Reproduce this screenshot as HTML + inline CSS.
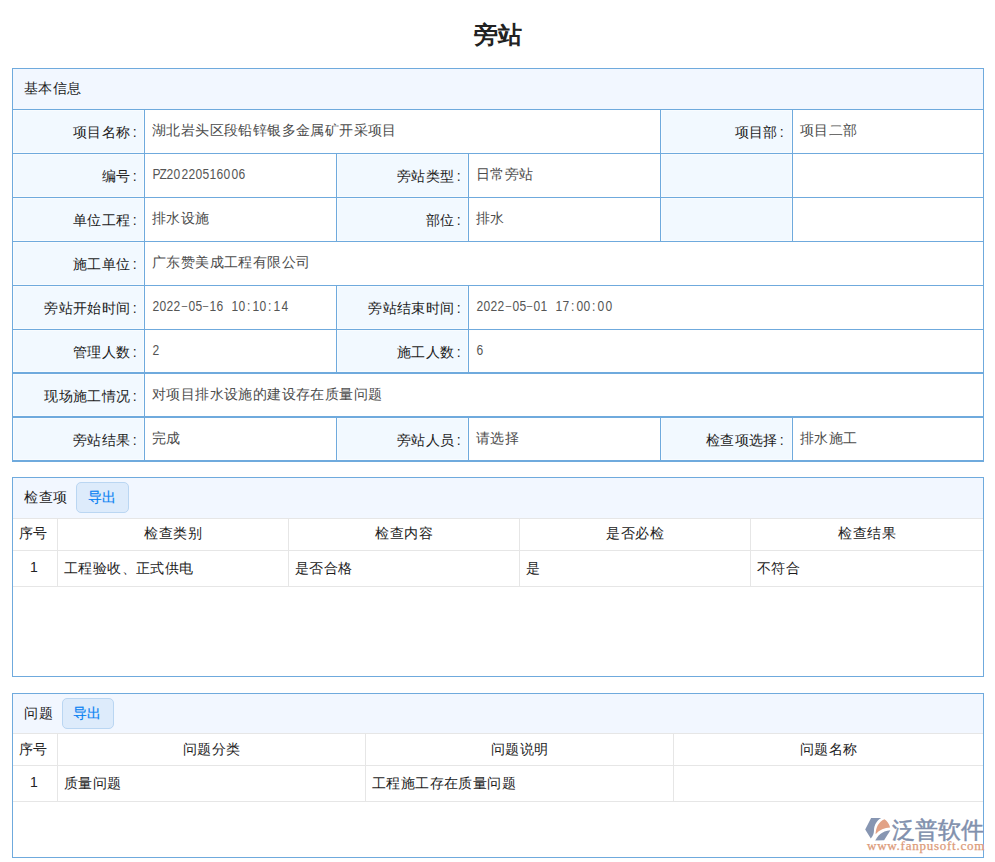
<!DOCTYPE html>
<html><head><meta charset="utf-8">
<style>
*{margin:0;padding:0;box-sizing:border-box}
html,body{width:995px;height:862px;overflow:hidden;background:#fff}
body{position:relative;font-family:"Liberation Sans",sans-serif;font-size:14px;color:#333}
.a{position:absolute}
.h{position:absolute;background:#6faadd;height:1px}
.v{position:absolute;background:#6faadd;width:1px}
.g{position:absolute;background:#e6e6e6}
.lb{position:absolute;background:#f2f9ff;box-shadow:0 0 0 1px #f8fcff}
.lt b{font-weight:normal;margin-left:2px}
.lt{position:absolute;text-align:right;white-space:nowrap;color:#1c1c1c;line-height:20px;font-size:14px;letter-spacing:0.4px}
.vt{position:absolute;white-space:nowrap;color:#4c4c4c;line-height:20px;font-size:14px;letter-spacing:0.4px}
.mono{font-size:14px;letter-spacing:0;color:#555}
.mono i.d{font-size:11.5px;position:relative;top:-2px}
.mono i{font-style:normal;display:inline-block;width:7.15px;text-align:center;transform:scaleX(.86)}
.th{position:absolute;text-align:center;white-space:nowrap;color:#222;line-height:20px;font-size:14px;letter-spacing:0.4px;text-indent:0.4px}
.td{position:absolute;white-space:nowrap;color:#1c1c1c;line-height:20px;font-size:14px;letter-spacing:0.4px}
.btn{position:absolute;background:#ddebfb;border:1px solid #bad6f2;border-radius:5px;color:#0a82f2;-webkit-text-stroke:0.2px #0a82f2;text-align:center;line-height:29px;font-size:14px;letter-spacing:0.4px;text-indent:0.4px}
</style></head><body>

<div class="a" style="left:0;width:995px;top:20px;text-align:center;font-size:24px;font-weight:bold;color:#222;line-height:30px">旁站</div>

<!-- ===== Table 1 ===== -->
<!-- header bg -->
<div class="a" style="left:13px;top:69px;width:970px;height:40px;background:#f2f7ff"></div>
<!-- label bgs (with 1px white inset) -->
<div class="lb" style="left:14px;top:111px;width:129px;height:41px"></div>
<div class="lb" style="left:662px;top:111px;width:129px;height:41px"></div>
<div class="lb" style="left:14px;top:155px;width:129px;height:41px"></div>
<div class="lb" style="left:338px;top:155px;width:129px;height:41px"></div>
<div class="lb" style="left:662px;top:155px;width:129px;height:41px"></div>
<div class="lb" style="left:14px;top:199px;width:129px;height:41px"></div>
<div class="lb" style="left:338px;top:199px;width:129px;height:41px"></div>
<div class="lb" style="left:662px;top:199px;width:129px;height:41px"></div>
<div class="lb" style="left:14px;top:243px;width:129px;height:41px"></div>
<div class="lb" style="left:14px;top:287px;width:129px;height:41px"></div>
<div class="lb" style="left:338px;top:287px;width:129px;height:41px"></div>
<div class="lb" style="left:14px;top:331px;width:129px;height:40px"></div>
<div class="lb" style="left:338px;top:331px;width:129px;height:40px"></div>
<div class="lb" style="left:14px;top:375px;width:129px;height:40px"></div>
<div class="lb" style="left:14px;top:419px;width:129px;height:40px"></div>
<div class="lb" style="left:338px;top:419px;width:129px;height:40px"></div>
<div class="lb" style="left:662px;top:419px;width:129px;height:40px"></div>

<!-- horizontal lines -->
<div class="h" style="left:12px;top:68px;width:972px"></div>
<div class="h" style="left:12px;top:109px;width:972px"></div>
<div class="h" style="left:12px;top:153px;width:972px"></div>
<div class="h" style="left:12px;top:197px;width:972px"></div>
<div class="h" style="left:12px;top:241px;width:972px"></div>
<div class="h" style="left:12px;top:285px;width:972px"></div>
<div class="h" style="left:12px;top:329px;width:972px"></div>
<div class="h" style="left:12px;top:372px;width:972px;height:2px"></div>
<div class="h" style="left:12px;top:416px;width:972px;height:2px"></div>
<div class="h" style="left:12px;top:460px;width:972px;height:2px"></div>
<!-- vertical lines -->
<div class="v" style="left:12px;top:68px;height:394px"></div>
<div class="v" style="left:983px;top:68px;height:394px"></div>
<div class="v" style="left:144px;top:109px;height:353px"></div>
<div class="v" style="left:660px;top:109px;height:132px"></div>
<div class="v" style="left:792px;top:109px;height:132px"></div>
<div class="v" style="left:336px;top:153px;height:88px"></div>
<div class="v" style="left:468px;top:153px;height:88px"></div>
<div class="v" style="left:336px;top:285px;height:88px"></div>
<div class="v" style="left:468px;top:285px;height:88px"></div>
<div class="v" style="left:336px;top:417px;height:44px"></div>
<div class="v" style="left:468px;top:417px;height:44px"></div>
<div class="v" style="left:660px;top:417px;height:44px"></div>
<div class="v" style="left:792px;top:417px;height:44px"></div>

<!-- header text -->
<div class="td" style="left:24px;top:78px">基本信息</div>

<!-- labels: right edge at border-10 -->
<div class="lt" style="right:858px;top:122px">项目名称<b>:</b></div>
<div class="lt" style="right:211px;top:122px">项目部<b>:</b></div>
<div class="lt" style="right:858px;top:166px">编号<b>:</b></div>
<div class="lt" style="right:534px;top:166px">旁站类型<b>:</b></div>
<div class="lt" style="right:858px;top:210px">单位工程<b>:</b></div>
<div class="lt" style="right:534px;top:210px">部位<b>:</b></div>
<div class="lt" style="right:858px;top:254px">施工单位<b>:</b></div>
<div class="lt" style="right:858px;top:298px">旁站开始时间<b>:</b></div>
<div class="lt" style="right:534px;top:298px">旁站结束时间<b>:</b></div>
<div class="lt" style="right:858px;top:342px">管理人数<b>:</b></div>
<div class="lt" style="right:534px;top:342px">施工人数<b>:</b></div>
<div class="lt" style="right:858px;top:386px">现场施工情况<b>:</b></div>
<div class="lt" style="right:858px;top:430px">旁站结果<b>:</b></div>
<div class="lt" style="right:534px;top:430px">旁站人员<b>:</b></div>
<div class="lt" style="right:211px;top:430px">检查项选择<b>:</b></div>

<!-- values -->
<div class="vt" style="left:152px;top:120px">湖北岩头区段铅锌银多金属矿开采项目</div>
<div class="vt" style="left:800px;top:120px">项目二部</div>
<div class="vt mono" style="left:152px;top:164px"><i>P</i><i>Z</i><i>2</i><i>0</i><i>2</i><i>2</i><i>0</i><i>5</i><i>1</i><i>6</i><i>0</i><i>0</i><i>6</i></div>
<div class="vt" style="left:476px;top:164px">日常旁站</div>
<div class="vt" style="left:152px;top:208px">排水设施</div>
<div class="vt" style="left:476px;top:208px">排水</div>
<div class="vt" style="left:152px;top:252px">广东赞美成工程有限公司</div>
<div class="vt mono" style="left:152px;top:296px"><i>2</i><i>0</i><i>2</i><i>2</i><i class="d">–</i><i>0</i><i>5</i><i class="d">–</i><i>1</i><i>6</i><i>&nbsp;</i><i>1</i><i>0</i><i>:</i><i>1</i><i>0</i><i>:</i><i>1</i><i>4</i></div>
<div class="vt mono" style="left:476px;top:296px"><i>2</i><i>0</i><i>2</i><i>2</i><i class="d">–</i><i>0</i><i>5</i><i class="d">–</i><i>0</i><i>1</i><i>&nbsp;</i><i>1</i><i>7</i><i>:</i><i>0</i><i>0</i><i>:</i><i>0</i><i>0</i></div>
<div class="vt mono" style="left:152px;top:340px"><i>2</i></div>
<div class="vt mono" style="left:476px;top:340px"><i>6</i></div>
<div class="vt" style="left:152px;top:384px">对项目排水设施的建设存在质量问题</div>
<div class="vt" style="left:152px;top:428px">完成</div>
<div class="vt" style="left:476px;top:428px">请选择</div>
<div class="vt" style="left:800px;top:428px">排水施工</div>

<!-- ===== Section 2 ===== -->
<div class="a" style="left:12px;top:477px;width:972px;height:200px;border:1px solid #6faadd"></div>
<div class="a" style="left:13px;top:478px;width:970px;height:40px;background:#f2f7ff"></div>
<div class="g" style="left:13px;top:518px;width:970px;height:1px"></div>
<div class="g" style="left:13px;top:550px;width:970px;height:1px"></div>
<div class="g" style="left:13px;top:586px;width:970px;height:1px"></div>
<div class="g" style="left:57px;top:519px;width:1px;height:67px"></div>
<div class="g" style="left:288px;top:519px;width:1px;height:67px"></div>
<div class="g" style="left:519px;top:519px;width:1px;height:67px"></div>
<div class="g" style="left:750px;top:519px;width:1px;height:67px"></div>
<div class="td" style="left:24px;top:487px;letter-spacing:0.5px">检查项</div>
<div class="btn" style="left:76px;top:482px;width:53px;height:31px;text-indent:-1px">导出</div>
<div class="th" style="left:11px;width:44px;top:523px">序号</div>
<div class="th" style="left:58px;width:230px;top:523px">检查类别</div>
<div class="th" style="left:289px;width:230px;top:523px">检查内容</div>
<div class="th" style="left:520px;width:230px;top:523px">是否必检</div>
<div class="th" style="left:751px;width:232px;top:523px">检查结果</div>
<div class="th" style="left:12px;width:44px;top:557px">1</div>
<div class="td" style="left:64px;top:558px">工程验收、正式供电</div>
<div class="td" style="left:295px;top:558px">是否合格</div>
<div class="td" style="left:526px;top:558px">是</div>
<div class="td" style="left:757px;top:558px">不符合</div>

<!-- ===== Section 3 ===== -->
<div class="a" style="left:12px;top:693px;width:972px;height:165px;border:1px solid #6faadd"></div>
<div class="a" style="left:13px;top:694px;width:970px;height:39px;background:#f2f7ff"></div>
<div class="g" style="left:13px;top:733px;width:970px;height:1px"></div>
<div class="g" style="left:13px;top:765px;width:970px;height:1px"></div>
<div class="g" style="left:13px;top:801px;width:970px;height:1px"></div>
<div class="g" style="left:57px;top:734px;width:1px;height:67px"></div>
<div class="g" style="left:365px;top:734px;width:1px;height:67px"></div>
<div class="g" style="left:673px;top:734px;width:1px;height:67px"></div>
<div class="td" style="left:24px;top:703px;letter-spacing:0.6px">问题</div>
<div class="btn" style="left:62px;top:698px;width:52px;height:31px;text-indent:-1px">导出</div>
<div class="th" style="left:11px;width:44px;top:739px">序号</div>
<div class="th" style="left:58px;width:307px;top:739px">问题分类</div>
<div class="th" style="left:366px;width:307px;top:739px">问题说明</div>
<div class="th" style="left:674px;width:309px;top:739px">问题名称</div>
<div class="th" style="left:12px;width:44px;top:772px">1</div>
<div class="td" style="left:64px;top:773px">质量问题</div>
<div class="td" style="left:372px;top:773px">工程施工存在质量问题</div>

<!-- logo -->
<svg class="a" style="left:860px;top:812px" width="36" height="32" viewBox="0 0 36 32">
  <path d="M11.1 5.9 L21.2 5.9 C16.5 8.5 14.2 13 14 18 C13.9 21 13.5 23.5 10.8 26.4 L5.2 17.4 Z" fill="#8796b2"/>
  <path d="M15.6 22.3 C15.6 16 18.5 9.5 24.5 7.2 C27.2 8.8 29.3 12 30.1 15.6 C24.5 15.8 19.5 18 15.6 22.3 Z" fill="#e2a286"/>
  <path d="M15.2 28.6 C17.5 24 21.5 19 30.4 18.2 L24.1 28.3 Z" fill="#8796b2"/>
</svg>
<div class="a" style="left:892px;top:816px;font-size:23px;line-height:28px;color:#8190ad;letter-spacing:0px;white-space:nowrap;-webkit-text-stroke:0.5px #8190ad">泛普软件</div>
<div class="a" style="left:867px;top:839px;font-family:'Liberation Serif',serif;font-size:13px;line-height:14px;color:#dc9a78;letter-spacing:0.75px;white-space:nowrap;-webkit-text-stroke:0.25px #dc9a78">www.fanpusoft.com</div>
</body></html>
